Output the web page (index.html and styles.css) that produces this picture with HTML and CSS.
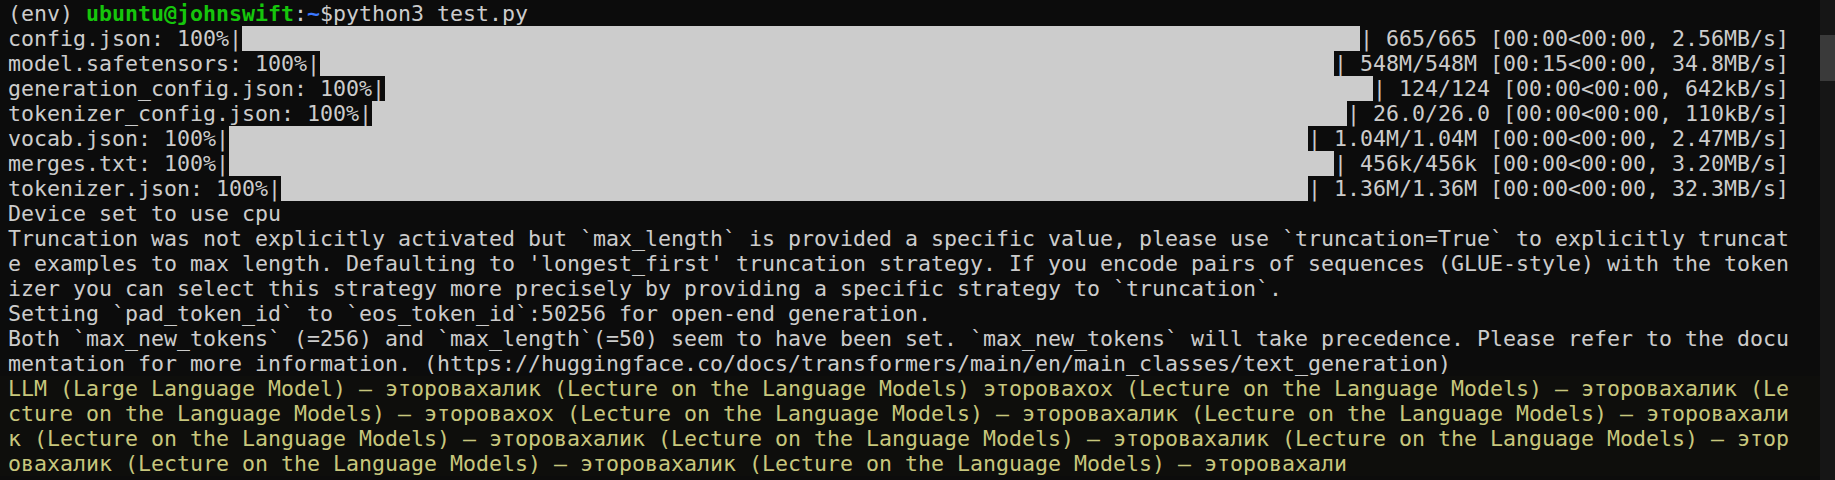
FILE: index.html
```html
<!DOCTYPE html>
<html lang="en">
<head>
<meta charset="utf-8">
<title>Terminal</title>
<link rel="stylesheet" href="styles.css">
</head>
<body>
<div class="window">
  <main class="terminal">
    <div class="line"><span>(env) </span><span class="g">ubuntu@johnswift</span><span>:</span><span class="b">~</span><span>$python3 test.py</span></div>
    <div class="line prog"><span>config.json: 100%|</span><span class="bar"></span><span>| 665/665 [00:00&lt;00:00, 2.56MB/s]</span></div>
    <div class="line prog"><span>model.safetensors: 100%|</span><span class="bar"></span><span>| 548M/548M [00:15&lt;00:00, 34.8MB/s]</span></div>
    <div class="line prog"><span>generation_config.json: 100%|</span><span class="bar"></span><span>| 124/124 [00:00&lt;00:00, 642kB/s]</span></div>
    <div class="line prog"><span>tokenizer_config.json: 100%|</span><span class="bar"></span><span>| 26.0/26.0 [00:00&lt;00:00, 110kB/s]</span></div>
    <div class="line prog"><span>vocab.json: 100%|</span><span class="bar"></span><span>| 1.04M/1.04M [00:00&lt;00:00, 2.47MB/s]</span></div>
    <div class="line prog"><span>merges.txt: 100%|</span><span class="bar"></span><span>| 456k/456k [00:00&lt;00:00, 3.20MB/s]</span></div>
    <div class="line prog"><span>tokenizer.json: 100%|</span><span class="bar"></span><span>| 1.36M/1.36M [00:00&lt;00:00, 32.3MB/s]</span></div>
    <div class="line">Device set to use cpu</div>
    <div class="line">Truncation was not explicitly activated but `max_length` is provided a specific value, please use `truncation=True` to explicitly truncat</div>
    <div class="line">e examples to max length. Defaulting to 'longest_first' truncation strategy. If you encode pairs of sequences (GLUE-style) with the token</div>
    <div class="line">izer you can select this strategy more precisely by providing a specific strategy to `truncation`.</div>
    <div class="line">Setting `pad_token_id` to `eos_token_id`:50256 for open-end generation.</div>
    <div class="line">Both `max_new_tokens` (=256) and `max_length`(=50) seem to have been set. `max_new_tokens` will take precedence. Please refer to the docu</div>
    <div class="line">mentation for more information. (https://huggingface.co/docs/transformers/main/en/main_classes/text_generation)</div>
    <div class="output">
      <div class="line y">LLM (Large Language Model) — эторовахалик (Lecture on the Language Models) эторовахох (Lecture on the Language Models) — эторовахалик (Le</div>
      <div class="line y">cture on the Language Models) — эторовахох (Lecture on the Language Models) — эторовахалик (Lecture on the Language Models) — эторовахали</div>
      <div class="line y">к (Lecture on the Language Models) — эторовахалик (Lecture on the Language Models) — эторовахалик (Lecture on the Language Models) — этор</div>
      <div class="line y">овахалик (Lecture on the Language Models) — эторовахалик (Lecture on the Language Models) — эторовахали</div>
    </div>
  </main>
  <aside class="scrollbar"><div class="thumb"></div></aside>
</div>
</body>
</html>
```

FILE: styles.css
```css
html, body {
  margin: 0;
  padding: 0;
  background: #0c0c0c;
  height: 100%;
  overflow: hidden;
}

.window {
  display: flex;
  height: 480px;
  background: #0c0c0c;
}

.terminal {
  flex: 1;
  padding: 1px 0 0 8px;
  font-family: "DejaVu Sans Mono", monospace;
  font-size: 21.6px;
  color: #cccccc;
  overflow: hidden;
}

.line {
  height: 25px;
  line-height: 25px;
  white-space: pre;
}

.prog {
  display: flex;
  width: 137ch;
}

.bar {
  flex: 1;
  height: 25px;
  background: #cccccc;
}

.g {
  color: #16c60c;
  font-weight: bold;
}

.b {
  color: #3b78ff;
  font-weight: bold;
}

.output {
  background: #0e0e0c;
  margin-left: -8px;
  padding-left: 8px;
}

.y {
  color: #c8c77d;
}

.scrollbar {
  width: 15px;
  background: #161616;
  display: flex;
  flex-direction: column;
}

.thumb {
  margin-top: 35px;
  height: 46px;
  background: #3a3a3a;
}
```
